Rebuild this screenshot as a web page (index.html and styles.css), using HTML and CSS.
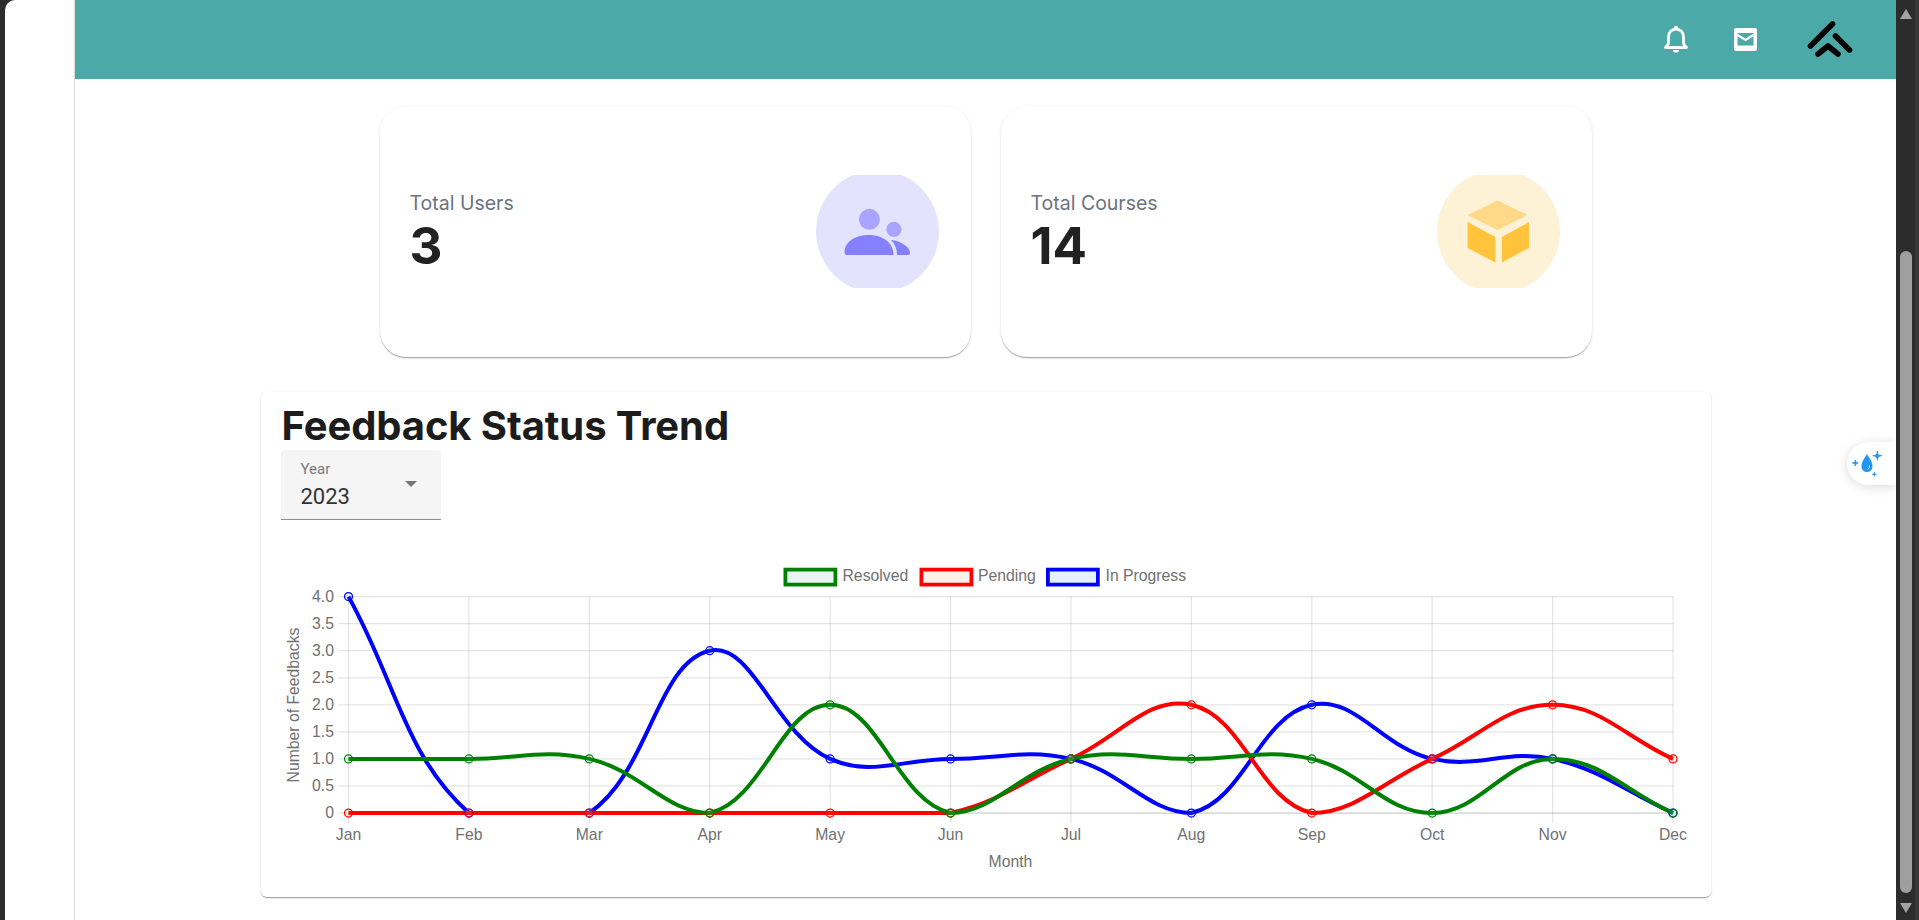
FILE: index.html
```html
<!DOCTYPE html>
<html lang="en">
<head>
  <meta charset="UTF-8" />
  <meta name="viewport" content="width=device-width, initial-scale=1.0"/>
  <title>Dashboard</title>
  <link rel="stylesheet" href="styles.css">
</head>
<body>
  <div class="page">
    <aside class="rail"></aside>
    <main class="main">
      <header class="topbar">
        <svg class="bell" viewBox="0 0 24 28" aria-label="Notifications">
          <circle cx="12" cy="3" r="2.2" fill="#fff"/>
          <path d="M1.5 22.5 Q4.5 20.5 4.5 17 V11.5 A7.5 7.5 0 0 1 19.5 11.5 V17 Q19.5 20.5 22.5 22.5 Z" fill="none" stroke="#fff" stroke-width="2.8" stroke-linejoin="round"/>
          <path d="M9 25 H15 A3 2.6 0 0 1 9 25 Z" fill="#fff"/>
        </svg>
        <svg class="mail" viewBox="0 0 23 23" aria-label="Messages">
          <rect width="23" height="23" rx="2" fill="#fff"/>
          <rect x="3.5" y="5" width="16" height="12.5" fill="#4ba9a7"/>
          <path d="M3.5 7 L11.5 12 L19.5 7" fill="none" stroke="#fff" stroke-width="2.2"/>
        </svg>
        <svg class="logo" viewBox="0 0 46 38" aria-label="Logo">
          <g fill="none" stroke="#000" stroke-width="5.6" stroke-linecap="round" stroke-linejoin="round">
            <path d="M3.5 26 L25.5 4"/>
            <path d="M28.5 16 L42.5 30"/>
            <path d="M11 34 L21 26 L31 34"/>
          </g>
        </svg>
      </header>

      <section class="stats">
        <div class="stat-card">
          <div>
            <div class="stat-label">Total Users</div>
            <div class="stat-value">3</div>
          </div>
          <div class="stat-icon">
            <div class="stat-circle stat-circle-users">
              <svg class="users-icon" viewBox="0 0 66 48">
                <circle cx="25.4" cy="11.3" r="10.5" fill="#a8a4ff"/>
                <circle cx="49.9" cy="21.3" r="7.6" fill="#a8a4ff"/>
                <path d="M.5 44 C.5 34 11 27 24.5 27 C38 27 49.5 34 49.5 47 H3 Q.5 47 .5 44 Z" fill="#8480ff"/>
                <path d="M47 32 C57 33 66 39 66 45 Q66 47 64 47 H53 C53 41 51 36 47 32 Z" fill="#8480ff"/>
              </svg>
            </div>
          </div>
        </div>
        <div class="stat-card">
          <div>
            <div class="stat-label">Total Courses</div>
            <div class="stat-value">14</div>
          </div>
          <div class="stat-icon">
            <div class="stat-circle stat-circle-courses">
              <svg class="cube-icon" viewBox="0 0 62 63">
                <path d="M30.5 1 L59.5 15 L30.5 29.5 L1.5 15 Z" fill="#ffd988" stroke="#ffd988" stroke-linejoin="round"/>
                <path d="M.6 22 L28.3 37 V62.5 L.6 48 Z" fill="#ffc43c"/>
                <path d="M34.8 37 L62 22 V48 L34.8 62.5 Z" fill="#ffc43c"/>
              </svg>
            </div>
          </div>
        </div>
      </section>

      <section class="trend-card">
        <div class="trend-head">
          <h2 class="trend-title">Feedback Status Trend</h2>
          <div class="year-select">
            <div>
              <div class="year-label">Year</div>
              <div class="year-value">2023</div>
            </div>
            <span class="year-caret"></span>
          </div>
        </div>
        <svg id="trendChart" class="trend-chart" viewBox="0 0 1450 377"></svg>
      </section>

      <div class="drop-widget">
        <svg class="drop-icon" viewBox="0 0 30 26">
          <path d="M15 3 C17 7 20.5 10 20.5 15.5 A5.5 5.5 0 0 1 9.5 15.5 C9.5 10 13 7 15 3 Z" fill="#2196f3"/>
          <path d="M17.5 14.5 Q17.8 17.5 15.5 18.5" fill="none" stroke="#bfe0fb" stroke-width="1"/>
          <path d="M25.3 .2 Q25.3 4.7 29.8 4.7 Q25.3 4.7 25.3 9.2 Q25.3 4.7 20.8 4.7 Q25.3 4.7 25.3 .2 Z" fill="#2196f3" stroke="#2196f3" stroke-width=".8"/>
          <path d="M3.3 9 Q3.3 12 6.3 12 Q3.3 12 3.3 15 Q3.3 12 .3 12 Q3.3 12 3.3 9 Z" fill="#2196f3" stroke="#2196f3" stroke-width=".8"/>
          <path d="M22.3 21.3 Q22.3 23.3 24.3 23.3 Q22.3 23.3 22.3 25.3 Q22.3 23.3 20.3 23.3 Q22.3 23.3 22.3 21.3 Z" fill="#2196f3" stroke="#2196f3" stroke-width=".6"/>
        </svg>
      </div>
    </main>
  </div>

  <div class="scrollbar">
    <span class="scroll-up"></span>
    <span class="scroll-thumb"></span>
    <span class="scroll-down"></span>
  </div>

  <script src="chart.js"></script>
</body>
</html>
```

FILE: styles.css
```css
html, body {
  margin: 0;
  height: 920px;
  overflow: hidden;
}
body {
  display: flex;
  background-color: #2c2c2c;
  font-family: Inter, "Liberation Sans", sans-serif;
}
.page {
  flex: 1;
  display: flex;
  min-width: 0;
  margin-left: 5px;
  background: #fff;
  border-top-left-radius: 10px;
  overflow: hidden;
}
.rail {
  width: 69px;
  border-right: 1px solid #dcdcdc;
}
.main {
  position: relative;
  flex: 1;
  min-width: 0;
}

/* top bar */
.topbar {
  display: flex;
  align-items: center;
  justify-content: flex-end;
  height: 79px;
  padding-right: 43px;
  background-color: #4ba9a7;
}
.bell {
  width: 24px;
  height: 28px;
  margin-right: 46px;
  margin-bottom: 1px;
}
.mail {
  width: 23px;
  height: 23px;
  margin-right: 50px;
}
.logo {
  width: 46px;
  height: 38px;
  margin-bottom: 2px;
}

/* stat cards */
.stats {
  display: flex;
  justify-content: center;
  gap: 30px;
  margin-top: 27px;
}
.stat-card {
  display: flex;
  align-items: center;
  justify-content: space-between;
  width: 591px;
  height: 251px;
  padding: 0 32px 0 30px;
  box-sizing: border-box;
  background: #fff;
  border-radius: 26px;
  box-shadow: 0 2px 1px -1px rgba(0,0,0,0.2), 0 1px 1px 0 rgba(0,0,0,0.14), 0 1px 3px 0 rgba(0,0,0,0.12);
}
.stat-label {
  padding-top: 3px;
  font-size: 19.5px;
  line-height: 24px;
  color: #6b7280;
}
.stat-value {
  margin-top: 1px;
  font-size: 51px;
  font-weight: 700;
  line-height: 60px;
  color: #212121;
}
.stat-icon {
  display: flex;
  align-items: center;
  justify-content: center;
  width: 123px;
  height: 113px;
  overflow: hidden;
}
.stat-circle {
  flex: none;
  display: flex;
  align-items: center;
  justify-content: center;
  width: 123px;
  height: 123px;
  border-radius: 50%;
}
.stat-circle-users {
  background-color: #e4e3fd;
}
.stat-circle-courses {
  background-color: #fdf1d6;
}
.users-icon {
  width: 66px;
  height: 48px;
}
.cube-icon {
  width: 62px;
  height: 63px;
}

/* chart card */
.trend-card {
  width: 1450px;
  height: 505px;
  margin: 35px auto 0;
  background: #fff;
  border-radius: 6px;
  box-shadow: 0 2px 1px -1px rgba(0,0,0,0.2), 0 1px 1px 0 rgba(0,0,0,0.14), 0 1px 3px 0 rgba(0,0,0,0.12);
}
.trend-head {
  height: 128px;
  padding-left: 20px;
  box-sizing: border-box;
}
.trend-title {
  margin: 0;
  padding: 10px 0 0 1px;
  font-size: 40px;
  font-weight: 700;
  line-height: 48px;
  letter-spacing: -0.1px;
  color: #1c1c1c;
}
.year-select {
  display: flex;
  align-items: center;
  justify-content: space-between;
  width: 160px;
  height: 70px;
  padding: 0 24px 0 20px;
  box-sizing: border-box;
  background-color: #f5f5f5;
  border-bottom: 1px solid #8f8f8f;
  border-radius: 4px 4px 0 0;
  font-family: Roboto, "Liberation Sans", sans-serif;
}
.year-label {
  font-size: 15px;
  line-height: 20px;
  color: #7a7a7a;
}
.year-value {
  margin-top: 4px;
  font-size: 22px;
  line-height: 28px;
  color: #333;
}
.year-caret {
  width: 0;
  height: 0;
  margin-bottom: 2px;
  border-left: 6.5px solid transparent;
  border-right: 6.5px solid transparent;
  border-top: 6.5px solid #757575;
}
.trend-chart {
  display: block;
  width: 1450px;
  height: 377px;
}
.trend-chart text {
  font-family: "Liberation Sans", Arial, sans-serif;
  font-size: 15.75px;
  fill: #707070;
}

/* floating widget */
.drop-widget {
  position: absolute;
  top: 442px;
  right: 0;
  display: flex;
  align-items: center;
  width: 49px;
  height: 43px;
  padding-left: 5px;
  box-sizing: border-box;
  background: #fff;
  border-radius: 22px 0 0 22px;
  box-shadow: 0 2px 12px rgba(0,0,0,0.14);
}
.drop-icon {
  width: 30px;
  height: 26px;
}

/* window scrollbar */
.scrollbar {
  flex: none;
  position: relative;
  display: flex;
  flex-direction: column;
  width: 23px;
  height: 920px;
  padding-top: 9px;
  padding-left: 4px;
  box-sizing: border-box;
  background: linear-gradient(to right, #2c2c2c 19px, #383838 19px);
}
.scroll-up, .scroll-down {
  width: 0;
  height: 0;
  border-left: 6px solid transparent;
  border-right: 6px solid transparent;
}
.scroll-up {
  border-bottom: 10px solid #a3a3a3;
}
.scroll-thumb {
  width: 12px;
  height: 642px;
  margin-top: 232px;
  background-color: #9f9f9f;
  border-radius: 6px;
}
.scroll-down {
  margin-top: 10px;
  border-top: 10px solid #a3a3a3;
}
```

FILE: chart.js
```js
const months = ["Jan", "Feb", "Mar", "Apr", "May", "Jun", "Jul", "Aug", "Sep", "Oct", "Nov", "Dec"];
// bottom to top drawing order
const series = [
  { color: "#0000ff", fill: "rgba(54,162,235,0.12)", data: [4, 0, 0, 3, 1, 1, 1, 0, 2, 1, 1, 0] },
  { color: "#ff0000", fill: "rgba(255,120,50,0.1)", data: [0, 0, 0, 0, 0, 0, 1, 2, 0, 1, 2, 1] },
  { color: "#008000", fill: "rgba(75,192,192,0.12)", data: [1, 1, 1, 0, 2, 0, 1, 1, 1, 0, 1, 0] }
];
const legend = [
  { label: "Resolved", color: "#008000", fill: "#e9f4f5", box: 522.5, text: 581.5 },
  { label: "Pending", color: "#ff0000", fill: "#fdf1ea", box: 658.5, text: 717 },
  { label: "In Progress", color: "#0000ff", fill: "#e6f1fb", box: 785, text: 844.5 }
];

const svg = document.getElementById("trendChart");
const left = 87.5, right = 1412, top0 = 76.6, bottom = 293;
const stepX = (right - left) / 11;
const stepY = (bottom - top0) / 8;
const px = i => left + i * stepX;
const py = v => bottom - v * 2 * stepY;
const clampY = y => Math.min(bottom, Math.max(top0, y));

function add(name, attrs, text) {
  const el = document.createElementNS("http://www.w3.org/2000/svg", name);
  for (const k in attrs) el.setAttribute(k, attrs[k]);
  if (text !== undefined) el.textContent = text;
  svg.appendChild(el);
  return el;
}

const grid = { stroke: "rgba(0,0,0,0.1)", "stroke-width": 1.25 };

for (let i = 0; i <= 8; i++) {
  const y = top0 + i * stepY;
  add("line", { x1: left - 10, x2: right, y1: y, y2: y, ...grid });
  const v = (8 - i) / 2;
  add("text", { x: 73, y: y + 5, "text-anchor": "end" }, v === 0 ? "0" : v.toFixed(1));
}
months.forEach((m, i) => {
  add("line", { x1: px(i), x2: px(i), y1: top0, y2: bottom + 10, ...grid });
  add("text", { x: px(i), y: 320, "text-anchor": "middle" }, m);
});
add("line", { x1: left, x2: right, y1: bottom, y2: bottom, ...grid });

add("text", { x: 749.5, y: 347, "text-anchor": "middle" }, "Month");
add("text", { "text-anchor": "middle", transform: "translate(37.5 185) rotate(-90)" }, "Number of Feedbacks");

legend.forEach(l => {
  add("rect", { x: l.box + 1.9, y: 49.6, width: 50, height: 15, fill: l.fill, stroke: l.color, "stroke-width": 3.75 });
  add("text", { x: l.text, y: 61 }, l.label);
});

// spline with tension 0.4, control points kept inside the plot area
function controls(pts, t) {
  return pts.map((p, i) => {
    const a = pts[i - 1] || p, b = pts[i + 1] || p;
    const d01 = Math.hypot(p.x - a.x, p.y - a.y);
    const d12 = Math.hypot(b.x - p.x, b.y - p.y);
    const sum = d01 + d12 || 1;
    return {
      px: p.x - t * (d01 / sum) * (b.x - a.x),
      py: clampY(p.y - t * (d01 / sum) * (b.y - a.y)),
      nx: p.x + t * (d12 / sum) * (b.x - a.x),
      ny: clampY(p.y + t * (d12 / sum) * (b.y - a.y))
    };
  });
}

series.forEach(s => {
  const pts = s.data.map((v, i) => ({ x: px(i), y: py(v) }));
  const c = controls(pts, 0.4);
  let d = `M${pts[0].x} ${pts[0].y}`;
  for (let i = 1; i < pts.length; i++) {
    d += ` C${c[i - 1].nx} ${c[i - 1].ny} ${c[i].px} ${c[i].py} ${pts[i].x} ${pts[i].y}`;
  }
  add("path", { d, fill: "none", stroke: s.color, "stroke-width": 4 });
});
series.forEach(s => {
  s.data.forEach((v, i) => {
    add("circle", { cx: px(i), cy: py(v), r: 4, fill: s.fill, stroke: s.color, "stroke-width": 1.25 });
  });
});
```
